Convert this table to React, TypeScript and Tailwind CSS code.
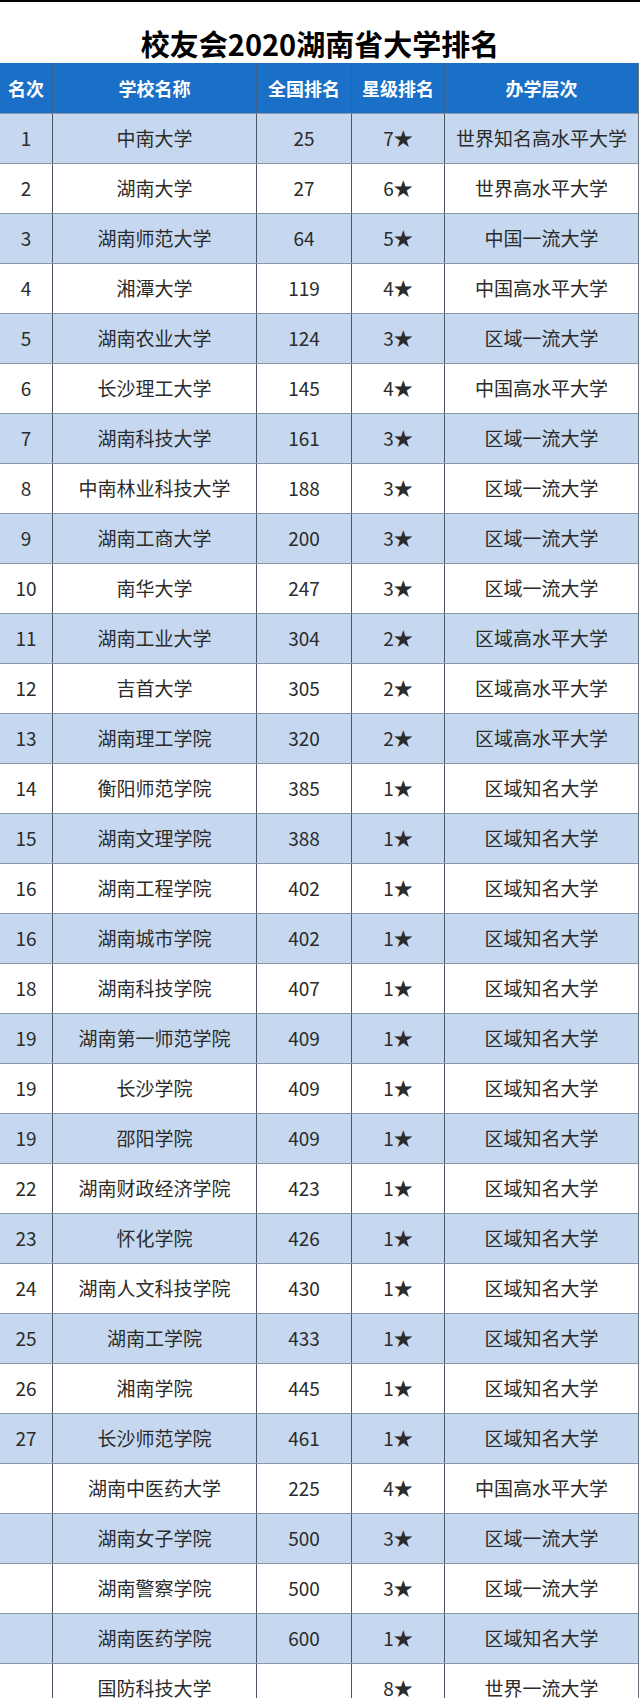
import React from "react";

type Row = [string, string, string, string, string];

const rows: Row[] = [
  ["1", "中南大学", "25", "7★", "世界知名高水平大学"],
  ["2", "湖南大学", "27", "6★", "世界高水平大学"],
  ["3", "湖南师范大学", "64", "5★", "中国一流大学"],
  ["4", "湘潭大学", "119", "4★", "中国高水平大学"],
  ["5", "湖南农业大学", "124", "3★", "区域一流大学"],
  ["6", "长沙理工大学", "145", "4★", "中国高水平大学"],
  ["7", "湖南科技大学", "161", "3★", "区域一流大学"],
  ["8", "中南林业科技大学", "188", "3★", "区域一流大学"],
  ["9", "湖南工商大学", "200", "3★", "区域一流大学"],
  ["10", "南华大学", "247", "3★", "区域一流大学"],
  ["11", "湖南工业大学", "304", "2★", "区域高水平大学"],
  ["12", "吉首大学", "305", "2★", "区域高水平大学"],
  ["13", "湖南理工学院", "320", "2★", "区域高水平大学"],
  ["14", "衡阳师范学院", "385", "1★", "区域知名大学"],
  ["15", "湖南文理学院", "388", "1★", "区域知名大学"],
  ["16", "湖南工程学院", "402", "1★", "区域知名大学"],
  ["16", "湖南城市学院", "402", "1★", "区域知名大学"],
  ["18", "湖南科技学院", "407", "1★", "区域知名大学"],
  ["19", "湖南第一师范学院", "409", "1★", "区域知名大学"],
  ["19", "长沙学院", "409", "1★", "区域知名大学"],
  ["19", "邵阳学院", "409", "1★", "区域知名大学"],
  ["22", "湖南财政经济学院", "423", "1★", "区域知名大学"],
  ["23", "怀化学院", "426", "1★", "区域知名大学"],
  ["24", "湖南人文科技学院", "430", "1★", "区域知名大学"],
  ["25", "湖南工学院", "433", "1★", "区域知名大学"],
  ["26", "湘南学院", "445", "1★", "区域知名大学"],
  ["27", "长沙师范学院", "461", "1★", "区域知名大学"],
  ["", "湖南中医药大学", "225", "4★", "中国高水平大学"],
  ["", "湖南女子学院", "500", "3★", "区域一流大学"],
  ["", "湖南警察学院", "500", "3★", "区域一流大学"],
  ["", "湖南医药学院", "600", "1★", "区域知名大学"],
  ["", "国防科技大学", "", "8★", "世界一流大学"],
];

const headers = ["名次", "学校名称", "全国排名", "星级排名", "办学层次"];

const font = { fontFamily: '"Noto Sans CJK SC", "Noto Sans", sans-serif' };

export default function App() {
  return (
    <div className="w-[640px] bg-white" style={font}>
      <div className="h-[63px] border-t-2 border-black flex items-center justify-center pt-[21px]">
        <span className="text-[29px] font-bold text-black leading-none tracking-[0px]">
          校友会2020湖南省大学排名
        </span>
      </div>
      <div className="w-[639px] border-r border-[#6b7280]">
        <div className="grid grid-cols-[53px_204px_95px_93px_193px] h-[50px] bg-[#1a70c6] text-white font-bold text-[18px]">
          {headers.map((h, i) => (
            <div
              key={i}
              className={`flex items-center justify-center ${i < 4 ? "border-r border-[#3d5f86]" : ""}`}
            >
              {h}
            </div>
          ))}
        </div>
        {rows.map((r, idx) => (
          <div
            key={idx}
            className={`grid grid-cols-[53px_204px_95px_93px_193px] h-[50px] border-t border-[#8c95a3] text-[19px] text-[#2b2b2b] ${
              idx % 2 === 0 ? "bg-[#c5d8ef]" : "bg-white"
            }`}
          >
            {r.map((c, i) => (
              <div
                key={i}
                className={`flex items-center justify-center ${i < 4 ? "border-r border-[#4b5563]" : ""}`}
              >
                {c}
              </div>
            ))}
          </div>
        ))}
      </div>
    </div>
  );
}
